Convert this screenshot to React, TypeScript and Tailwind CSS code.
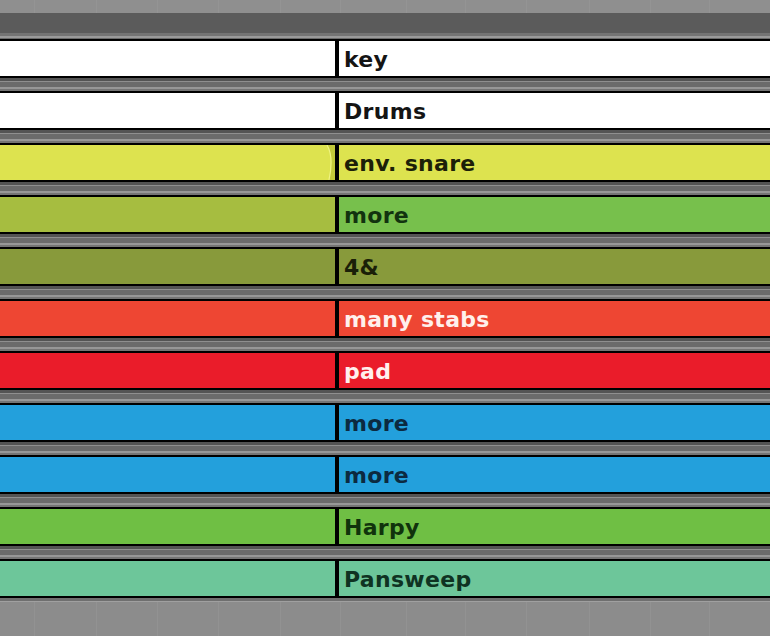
import React from 'react';

type Clip = {
  name: string;
  left: string;
  right: string;
  text: string;
  notch?: boolean;
};

const CLIPS: Clip[] = [
  { name: 'key', left: 'bg-white', right: 'bg-white', text: 'text-[#141414]' },
  { name: 'Drums', left: 'bg-white', right: 'bg-white', text: 'text-[#141414]' },
  { name: 'env. snare', left: 'bg-[#dde34f]', right: 'bg-[#dde34f]', text: 'text-[#1c1f08]', notch: true },
  { name: 'more', left: 'bg-[#a6bd40]', right: 'bg-[#77c04c]', text: 'text-[#12330f]' },
  { name: '4&', left: 'bg-[#889a3b]', right: 'bg-[#889a3b]', text: 'text-[#1a1f08]' },
  { name: 'many stabs', left: 'bg-[#ee4633]', right: 'bg-[#ee4633]', text: 'text-[#fff0ec]' },
  { name: 'pad', left: 'bg-[#ea1c2a]', right: 'bg-[#ea1c2a]', text: 'text-[#fff0ee]' },
  { name: 'more', left: 'bg-[#23a0dc]', right: 'bg-[#23a0dc]', text: 'text-[#0c2a40]' },
  { name: 'more', left: 'bg-[#23a0dc]', right: 'bg-[#23a0dc]', text: 'text-[#0c2a40]' },
  { name: 'Harpy', left: 'bg-[#6fbf44]', right: 'bg-[#6fbf44]', text: 'text-[#10330c]' },
  { name: 'Pansweep', left: 'bg-[#6dc69a]', right: 'bg-[#6dc69a]', text: 'text-[#0f3322]' },
];

const GRID = [34, 96, 157, 218, 280, 340, 406, 465, 526, 589, 650, 709];

function GridLines({ tone }: { tone: string }) {
  return (
    <div className="pointer-events-none absolute inset-0">
      {GRID.map((x) => (
        <div key={x} className={`absolute top-0 bottom-0 w-px ${tone}`} style={{ left: x }} />
      ))}
    </div>
  );
}

function Gap() {
  return (
    <div className="flex flex-col">
      <div className="h-[3px] bg-[#545454]" />
      <div className="h-px bg-[#8f8f8f]" />
      <div className="h-[5px] bg-[#6b6b6b]" />
      <div className="h-[2px] bg-[#979797]" />
      <div className="h-[2px] bg-[#757575]" />
    </div>
  );
}

function Track({ clip }: { clip: Clip }) {
  return (
    <div className="flex h-[39px] flex-col border-y-2 border-black">
      <div className="flex h-[35px]">
        <div className={`relative w-[335px] ${clip.left}`}>
          {clip.notch && (
            <svg className="absolute right-0 top-0 h-[35px] w-[10px]" viewBox="0 0 10 35">
              <path d="M2 0 Q9 12 4 35 L10 35 L10 0 Z" fill="#c3c93a" />
              <path d="M2 0 Q9 12 4 35" stroke="#f0f383" strokeWidth="1.2" fill="none" />
            </svg>
          )}
        </div>
        <div className="w-[4px] bg-black" />
        <div className={`flex flex-1 items-center pl-[5px] pt-[3px] ${clip.right}`}>
          <span className={`text-[22px] font-bold leading-none tracking-[0.3px] ${clip.text}`}>
            {clip.name}
          </span>
        </div>
      </div>
    </div>
  );
}

export default function App() {
  return (
    <div
      className="h-[636px] w-[770px] overflow-hidden bg-[#8b8b8b]"
      style={{ fontFamily: '"DejaVu Sans", Verdana, sans-serif' }}
    >
      <div className="relative h-[13px] bg-[#8f8f8f]">
        <GridLines tone="bg-[#949494]" />
      </div>
      <div className="h-[20px] bg-[#5b5b5b]" />
      <div className="h-[3px] bg-[#747474]" />
      <div className="h-[2px] bg-[#9a9a9a]" />
      <div className="h-px bg-[#6a6a6a]" />

      {CLIPS.map((c, i) => (
        <div key={i}>
          <Track clip={c} />
          {i < CLIPS.length - 1 && <Gap />}
        </div>
      ))}

      <div className="h-[3px] bg-[#6f6f6f]" />
      <div className="h-px bg-[#a0a0a0]" />
      <div className="relative h-[40px] bg-[#8c8c8c]">
        <GridLines tone="bg-[#929292]" />
      </div>
    </div>
  );
}
